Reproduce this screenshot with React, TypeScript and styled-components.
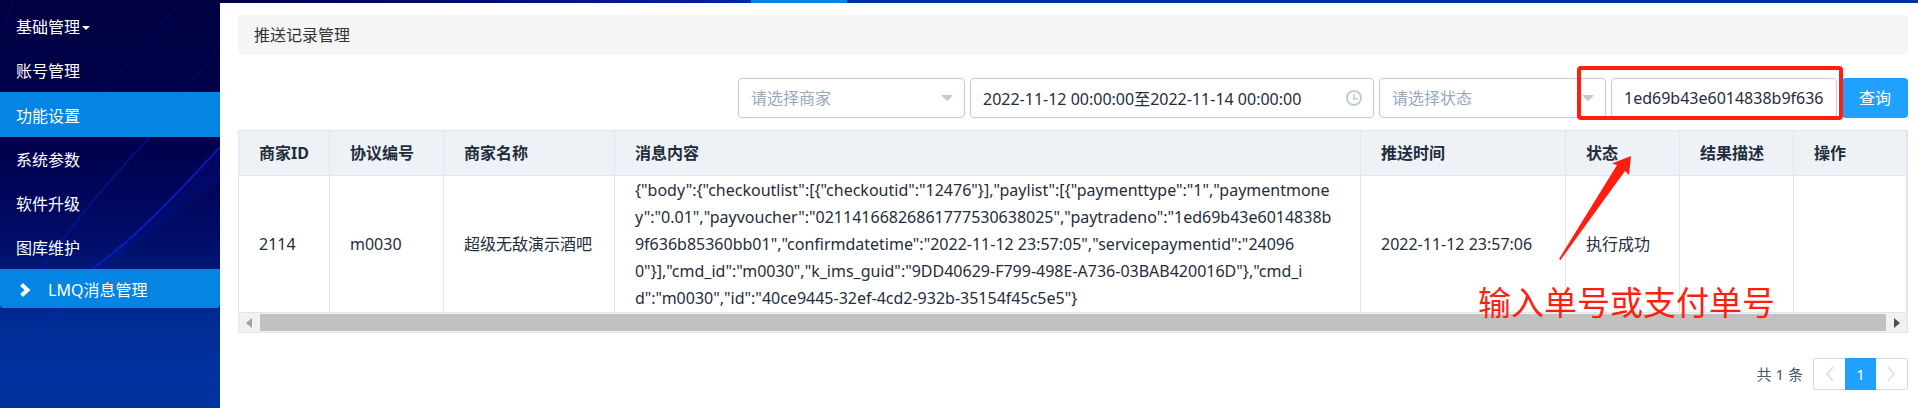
import React from 'react';
import styled, { createGlobalStyle, css } from 'styled-components';

const GlobalStyle = createGlobalStyle`
  *, *::before, *::after { box-sizing: border-box; }
  body {
    margin: 0;
    color: #333;
    background: #fff;
    font: 16px/24px "Noto Sans", "Noto Sans CJK SC", sans-serif;
  }
  button, input, select { font: inherit; }
`;

const Page = styled.div`
  position: relative;
  display: flex;
  min-height: 100vh;
`;

const Sidebar = styled.nav`
  position: relative;
  isolation: isolate;
  flex: 0 0 220px;
  padding-top: 3px;
  background: linear-gradient(#000042 0, #00004c 35%, #000c68 58%, #002280 74%, #002a92 77%, #0033a0 92%, #00339c);
`;

const SidebarArt = styled.svg`
  position: absolute;
  inset: 0;
  z-index: -1;
  width: 100%;
  height: 100%;
`;

const NavItem = styled.a<{ $active?: boolean }>`
  display: flex;
  align-items: center;
  height: ${(p) => (p.$active ? 45 : 44)}px;
  padding: 2px 16px 0;
  color: #fff;
  text-decoration: none;
  ${(p) => p.$active && css`background: #0485e4;`}
`;

const NavHeading = styled(NavItem)`
  height: 45px;
`;

const SubItem = styled(NavItem)`
  height: 39px;
  gap: 17px;
  padding: 2px 19px 0;
  border-radius: 0 0 4px 4px;
`;

const Caret = styled.span`
  margin: 2px 0 0 2px;
  border: 4px solid transparent;
  border-top-color: #fff;
  border-bottom: 0;
`;

const Main = styled.main`
  flex: 1;
  min-width: 0;
`;

const TopStrip = styled.div`
  display: flex;
  height: 3px;
  padding-left: 531px;
  background: linear-gradient(90deg, #000042, #001070 16%, #0020a0 29%, #0030a8 32%, #00339c 38%);
`;

const ActiveTab = styled.span`
  width: 96px;
  background: #0485e4;
`;

const Content = styled.div`
  padding: 12px 10px 0 18px;
`;

const Title = styled.h1`
  height: 40px;
  margin: 0 0 23px;
  padding: 8px 16px;
  border-radius: 4px;
  background: #f5f5f5;
  font-size: 16px;
  font-weight: 400;
`;

const Filters = styled.form`
  display: flex;
  justify-content: flex-end;
  gap: 5px;
  margin-bottom: 12px;
`;

const Field = styled.label<{ $width: number }>`
  position: relative;
  width: ${(p) => p.$width}px;
  height: 40px;
`;

const control = css`
  width: 100%;
  height: 40px;
  border: 1px solid #bfcbd9;
  border-radius: 4px;
  background: #fff;
  outline: 0;
`;

const Select = styled.select`
  ${control}
  padding: 0 32px 0 12px;
  appearance: none;
  color: #97a8be;
`;

const Input = styled.input`
  ${control}
  padding: 0 12px;
  color: #1f2d3d;
`;

const FieldIcon = styled.svg`
  position: absolute;
  top: 0;
  bottom: 0;
  right: 12px;
  margin: auto;
  pointer-events: none;
`;

const SearchButton = styled.button`
  width: 66px;
  height: 40px;
  padding: 0;
  border: 0;
  border-radius: 4px;
  background: #20a0ff;
  color: #fff;
`;

const TableBox = styled.div`
  border: 1px solid #dfe6ec;
`;

const Table = styled.table`
  width: 100%;
  border-collapse: separate;
  border-spacing: 0;
  table-layout: fixed;
  color: #1f2d3d;
`;

const Th = styled.th`
  height: 45px;
  padding: 0 20px;
  border: solid #dfe6ec;
  border-width: 0 1px 1px 0;
  background: #eef1f6;
  text-align: left;
`;

const Td = styled.td`
  padding: 1px 20px 0;
  border: solid #dfe6ec;
  border-width: 0 1px 1px 0;
  line-height: 27px;
  white-space: pre;
`;

const ScrollBar = styled.div`
  display: flex;
  align-items: center;
  justify-content: space-between;
  height: 19px;
  padding: 0 7px;
  gap: 8px;
  background: #f1f1f1;
`;

const Thumb = styled.div`
  flex: 1;
  height: 17px;
  background: #c1c1c1;
`;

const Pager = styled.div`
  display: flex;
  align-items: center;
  justify-content: flex-end;
  gap: 10px;
  margin-top: 25px;
  color: #48576a;
  font-size: 15px;
`;

const Pages = styled.div`
  display: flex;
  height: 32px;
  border: 1px solid #d1dbe5;
  border-radius: 2px;
`;

const PageButton = styled.button<{ $active?: boolean }>`
  display: flex;
  align-items: center;
  justify-content: center;
  width: 31px;
  height: 32px;
  margin-top: -1px;
  padding: 0;
  border: 0;
  background: ${(p) => (p.$active ? '#20a0ff' : 'transparent')};
  color: ${(p) => (p.$active ? '#fff' : '#e4e4e4')};
`;

const Markup = styled.div`
  position: absolute;
  top: 66px;
  right: 75px;
  width: 266px;
  height: 54px;
  border: 4px solid #ff1e10;
  border-radius: 4px;
  pointer-events: none;
`;

const Arrow = styled.svg`
  position: absolute;
  top: 154px;
  right: 286px;
  pointer-events: none;
`;

const Note = styled.p`
  position: absolute;
  top: 281px;
  right: 143px;
  margin: 0;
  color: #ff1e10;
  font-size: 33px;
  line-height: 44px;
  pointer-events: none;
`;

const menu = ['账号管理', '功能设置', '系统参数', '软件升级', '图库维护'];

const columns = [
  { title: '商家ID', width: 91, value: '2114' },
  { title: '协议编号', width: 114, value: 'm0030' },
  { title: '商家名称', width: 171, value: '超级无敌演示酒吧' },
  {
    title: '消息内容',
    width: 746,
    value: [
      '{"body":{"checkoutlist":[{"checkoutid":"12476"}],"paylist":[{"paymenttype":"1","paymentmone',
      'y":"0.01","payvoucher":"02114166826861777530638025","paytradeno":"1ed69b43e6014838b',
      '9f636b85360bb01","confirmdatetime":"2022-11-12 23:57:05","servicepaymentid":"24096',
      '0"}],"cmd_id":"m0030","k_ims_guid":"9DD40629-F799-498E-A736-03BAB420016D"},"cmd_i',
      'd":"m0030","id":"40ce9445-32ef-4cd2-932b-35154f45c5e5"}',
    ].join('\n'),
  },
  { title: '推送时间', width: 205, value: '2022-11-12 23:57:06' },
  { title: '状态', width: 114, value: '执行成功' },
  { title: '结果描述', width: 114, value: '' },
  { title: '操作', width: 113, value: '' },
];

const totalWidth = columns.reduce((sum, c) => sum + c.width, 0);

const DropIcon = () => (
  <FieldIcon width="12" height="8" viewBox="0 0 12 8">
    <path d="M1.500 1h9.500Q12 1 11.300 2L7 6.500Q6.200 7.300 5.400 6.500L.9 2Q.3 1 1.500 1Z" fill="#bfcbd9" />
  </FieldIcon>
);

export default function App() {
  return (
    <>
      <GlobalStyle />
      <Page>
        <Sidebar>
          <SidebarArt viewBox="0 0 220 408" preserveAspectRatio="none" fill="none">
            <path d="M182 0Q140 48 106 90M220 45Q205 65 187 90M14 0Q8 18 0 34" stroke="#0a1aa8" strokeOpacity=".18" strokeWidth="2" />
            <path d="M150 137 Q100 190 66 235 T38 270" stroke="#0a1aa8" strokeOpacity=".5" strokeWidth="2" />
            <path d="M220 147Q180 191 150 220T92 269" stroke="#0a22d8" strokeOpacity=".75" strokeWidth="2" />
            <path d="M220 178Q165 225 104 269L92 269Q165 220 220 147Z" fill="#0018a0" fillOpacity=".2" />
            <path d="M62 308Q40 330 14 351M0 313L8 307" stroke="#0a30d8" strokeOpacity=".3" strokeWidth="2" />
          </SidebarArt>
          <NavHeading href="#">基础管理<Caret /></NavHeading>
          {menu.map((m) => (
            <NavItem key={m} href="#" $active={m === '功能设置'}>{m}</NavItem>
          ))}
          <SubItem href="#" $active>
            <svg width="12" height="16" viewBox="0 0 12 16" fill="none">
              <path d="M2.500 2.500L8.500 8L2.500 13.500" stroke="#fff" strokeWidth="4" />
            </svg>
            LMQ消息管理
          </SubItem>
        </Sidebar>
        <Main>
          <TopStrip><ActiveTab /></TopStrip>
          <Content>
            <Title>推送记录管理</Title>
            <Filters onSubmit={(e) => e.preventDefault()}>
              <Field $width={227}>
                <Select aria-label="商家"><option>请选择商家</option></Select>
                <DropIcon />
              </Field>
              <Field $width={404}>
                <Input aria-label="时间" defaultValue="2022-11-12 00:00:00至2022-11-14 00:00:00" />
                <FieldIcon width="16" height="16" viewBox="0 0 16 16" fill="none" stroke="#bfcbd9">
                  <circle cx="8" cy="8" r="7" strokeWidth="2" />
                  <path d="M8 4v5h4" strokeWidth="1.500" />
                </FieldIcon>
              </Field>
              <Field $width={227}>
                <Select aria-label="状态"><option>请选择状态</option></Select>
                <DropIcon />
              </Field>
              <Field $width={226}>
                <Input aria-label="单号" defaultValue="1ed69b43e6014838b9f636" />
              </Field>
              <SearchButton>查询</SearchButton>
            </Filters>
            <TableBox>
              <Table>
                <colgroup>
                  {columns.map((c) => <col key={c.title} style={{ width: `${(c.width / totalWidth) * 100}%` }} />)}
                </colgroup>
                <thead><tr>{columns.map((c) => <Th key={c.title}>{c.title}</Th>)}</tr></thead>
                <tbody><tr>{columns.map((c) => <Td key={c.title}>{c.value}</Td>)}</tr></tbody>
              </Table>
              <ScrollBar>
                <svg width="6" height="10" viewBox="0 0 6 10"><path d="M6 0v10L0 5Z" fill="#a3a3a3" /></svg>
                <Thumb />
                <svg width="6" height="10" viewBox="0 0 6 10"><path d="M0 0v10L6 5Z" fill="#505050" /></svg>
              </ScrollBar>
            </TableBox>
            <Pager>
              <span>共 1 条</span>
              <Pages>
                <PageButton aria-label="上一页">
                  <svg width="9" height="16" viewBox="0 0 9 16" fill="none" stroke="currentColor" strokeWidth="2"><path d="M8 1L2 8l6 7" /></svg>
                </PageButton>
                <PageButton $active>1</PageButton>
                <PageButton aria-label="下一页">
                  <svg width="9" height="16" viewBox="0 0 9 16" fill="none" stroke="currentColor" strokeWidth="2"><path d="M1 1l6 7-6 7" /></svg>
                </PageButton>
              </Pages>
            </Pager>
          </Content>
        </Main>
        <Markup />
        <Arrow width="74" height="108" viewBox="0 0 74 108">
          <path d="M1 105L59 11L54 9.500L73 2L71 21L67 17L2.500 106Z" fill="#ff1e10" />
        </Arrow>
        <Note>输入单号或支付单号</Note>
      </Page>
    </>
  );
}
